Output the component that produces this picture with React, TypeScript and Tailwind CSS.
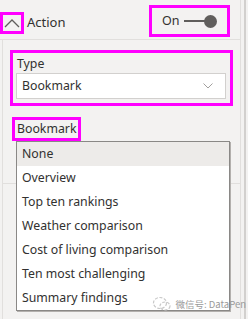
const FONT = "font-['Segoe_UI','Noto_Sans','Open_Sans',sans-serif]";

const BOOKMARKS = [
  'None',
  'Overview',
  'Top ten rankings',
  'Weather comparison',
  'Cost of living comparison',
  'Ten most challenging',
  'Summary findings',
];

function ChevronUp() {
  return (
    <svg width="16" height="10" viewBox="0 0 16 10" fill="none">
      <polyline points="1,9 8,2 15,9" stroke="#605e5c" strokeWidth="1.3" />
    </svg>
  );
}

function ChevronDown() {
  return (
    <svg width="10" height="6" viewBox="0 0 10 6" fill="none">
      <polyline points="0.5,0.5 5,5 9.5,0.5" stroke="#a19f9d" strokeWidth="1" />
    </svg>
  );
}

function WatermarkIcon() {
  return (
    <svg width="20" height="16" viewBox="0 0 20 16" fill="none">
      <ellipse cx="8" cy="7" rx="6.5" ry="5.5" stroke="#c8c8c8" strokeWidth="1.2" strokeDasharray="3 1.5" />
      <ellipse cx="13" cy="10" rx="5" ry="4" stroke="#c8c8c8" strokeWidth="1.2" strokeDasharray="3 1.5" />
    </svg>
  );
}

export default function App() {
  return (
    <div className={`${FONT} relative flex h-[319px] w-[248px] overflow-hidden bg-[#f3f2f1] text-[#323130]`}>
      <div className="flex w-[240px] flex-col">
        {/* Action header */}
        <div className="flex h-[40px] items-start border-b border-[#e1dfdd]">
          <div className="mt-[12px] flex h-[22px] w-[24px] items-center justify-center border-[3px] border-[#ff00ff]">
            <ChevronUp />
          </div>
          <span className="mt-[13px] ml-[3px] text-[13px] leading-[18px] text-[#323130]">Action</span>
          <div className="ml-auto mt-[5px] mr-[10px] flex h-[32px] w-[81px] items-center border-[3px] border-[#ff00ff] pl-[10px]">
            <span className="text-[12.5px] leading-[16px]">On</span>
            <div className="ml-[4px] flex items-center">
              <div className="h-[2px] w-[22px] bg-[#605e5c]" />
              <div className="-ml-[2px] h-[13px] w-[13px] rounded-full bg-[#605e5c]" />
            </div>
          </div>
        </div>

        <div className="ml-[2px] flex flex-1 flex-col border-l border-[#e1dfdd]">
          {/* Type */}
          <div className="mt-[10px] ml-[7px] flex h-[56px] w-[223px] flex-col border-[3px] border-[#ff00ff]">
            <span className="mt-[2px] pl-[4px] text-[12.3px] leading-[17px] text-[#323130]">Type</span>
            <div className="mt-[1px] ml-[3px] flex h-[26px] w-[210px] items-center justify-between border border-[#d2d0ce] bg-white pr-[12px] pl-[5px]">
              <span className="text-[12.3px] leading-[16px]">Bookmark</span>
              <ChevronDown />
            </div>
          </div>

          {/* Bookmark */}
          <div className="relative h-[78px] border-b border-[#e1dfdd]">
            <div className="mt-[11px] ml-[9px] flex h-[24px] w-[69px] items-center border-[3px] border-[#ff00ff] pl-[2px]">
              <span className="text-[12.3px] leading-[16px]">Bookmark</span>
            </div>
            <div className="absolute top-[35px] left-[13px] z-10 flex w-[214px] flex-col border border-[#8a8886] bg-white shadow-[1px_1px_0_#b3b0ad]">
              {BOOKMARKS.map((b, i) => (
                <div
                  key={b}
                  className={`flex h-[24px] items-center pl-[5px] text-[12.3px] leading-[16px] ${i === 0 ? 'bg-[#edebe9]' : ''}`}
                >
                  {b}
                </div>
              ))}
            </div>
          </div>
        </div>
      </div>

      {/* scrollbar */}
      <div className="flex w-[8px] border-l border-[#e1dfdd] bg-[#f3f2f1]">
        <div className="ml-[3px] w-[2px] bg-[#d2d0ce]" />
      </div>

      {/* watermark */}
      <div className="absolute right-[2px] bottom-[7px] z-20 flex items-center gap-[3px] whitespace-nowrap font-['Noto_Sans_CJK_SC',sans-serif] text-[9.5px] leading-[12px] text-[#9a9a9a]">
        <WatermarkIcon />
        <span>微信号: DataPen</span>
      </div>
    </div>
  );
}
